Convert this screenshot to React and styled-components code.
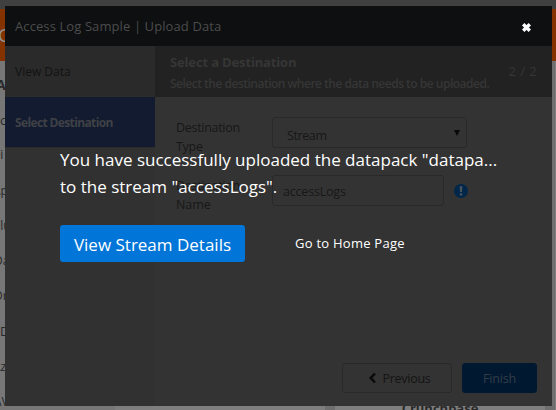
import React from "react";
import styled, { createGlobalStyle } from "styled-components";

const Global = createGlobalStyle`
  * { box-sizing: border-box; }
  html, body { margin: 0; overflow: hidden; background: #777; }
  body { font-family: "Open Sans", "Noto Sans", sans-serif; color: #171717; }
  button { font-family: inherit; padding: 0; }
`;

const Line = styled.span`
  display: block;
  white-space: nowrap;
  font-size: ${(p) => p.$size || 12}px;
  line-height: ${(p) => p.$lh || 19}px;
  letter-spacing: ${(p) => p.$ls || 0}px;
  font-weight: ${(p) => p.$weight || 400};
`;

const Page = styled.div`
  position: relative;
  width: 556px;
  height: 410px;
  overflow: hidden;
  background: #777;
`;
const TopStrip = styled.div`
  height: 9px;
  background: #404040;
`;
const BrandBar = styled.div`
  height: 52px;
  background: #833200;
  color: #929292;
  font-size: 18px;
  line-height: 52px;
  text-indent: -2px;
`;
const Catalog = styled.div`
  display: flex;
  justify-content: space-between;
  height: 349px;
`;
const Categories = styled.div`
  display: flex;
  flex-direction: column;
  gap: 17.2px;
  padding-top: 15px;
  width: 100px;
  color: #292929;
`;
const Category = styled(Line)`
  margin-left: ${(p) => p.$shift}px;
`;
const Cards = styled.div`
  display: flex;
  align-items: flex-end;
  gap: 10px;
  width: 441px;
  background: #6e6e6e;
`;
const Card = styled.div`
  width: 210px;
  height: 349px;
  flex: none;
  background: #7e7e7e;
  display: flex;
  flex-direction: column;
  justify-content: flex-end;
  align-items: center;
  color: #292929;
`;
const CardTitle = styled(Line)`
  margin-bottom: -8px;
`;

const Dialog = styled.section`
  position: absolute;
  left: 5px;
  top: 6px;
  width: 547px;
  height: 400px;
  background: #333;
  display: flex;
  flex-direction: column;
`;
const Header = styled.header`
  height: 40px;
  flex: none;
  padding: 0 20px 0 10px;
  display: flex;
  align-items: center;
  justify-content: space-between;
  background: #0d0f10;
  color: #4c4c4c;
`;
const Close = styled.button`
  width: 11px;
  height: 11px;
  border: 0;
  background: none;
  display: flex;
  margin-top: 3px;
`;
const Body = styled.div`
  flex: 1;
  display: flex;
`;
const Sidebar = styled.nav`
  width: 150px;
  flex: none;
  background: #313131;
`;
const Step = styled.div`
  height: 51px;
  padding-left: 10px;
  display: flex;
  align-items: center;
  border-bottom: 1px solid #2b2b2b;
  background: ${(p) => (p.$active ? "#121b2f" : "#2a2a2a")};
  color: ${(p) => (p.$active ? "#3f4146" : "#121212")};
`;
const Content = styled.main`
  flex: 1;
  min-width: 0;
  display: flex;
  flex-direction: column;
`;
const Banner = styled.div`
  height: 51px;
  flex: none;
  padding: 2px 15px 0;
  background: #222;
  color: #363636;
  display: flex;
  align-items: center;
  justify-content: space-between;
`;
const PageCount = styled(Line)`
  margin-top: -2px;
`;
const Form = styled.div`
  flex: 1;
  padding: 20px 0 0 21px;
  display: flex;
  flex-direction: column;
  gap: 19px;
`;
const Field = styled.div`
  height: 39px;
  display: flex;
  align-items: flex-start;
`;
const FieldLabel = styled.div`
  width: 96px;
  padding-top: 1px;
`;
const Control = styled.div`
  width: ${(p) => p.$width}px;
  height: 31px;
  padding: ${(p) => p.$pad};
  border: 1px solid #292929;
  border-radius: 3px;
  display: flex;
  justify-content: space-between;
`;
const Hint = styled.div`
  margin: 9px 0 0 10px;
  height: 14px;
  display: flex;
`;
const Caret = styled.svg`
  margin-top: 4px;
`;
const Footer = styled.footer`
  display: flex;
  justify-content: flex-end;
  gap: 10px;
  padding: 0 15px 13px 0;
`;
const FooterButton = styled.button`
  width: ${(p) => p.$width}px;
  height: 30px;
  border: 1px solid ${(p) => (p.$primary ? "#001830" : "#292929")};
  border-radius: 3px;
  background: ${(p) => (p.$primary ? "#001830" : "#333")};
  color: ${(p) => (p.$primary ? "#333e49" : "#141414")};
  display: flex;
  align-items: center;
  justify-content: center;
  gap: 5px;
`;
const PreviousButton = styled(FooterButton)`
  padding-left: 5px;
`;

const Success = styled.div`
  position: absolute;
  left: 55px;
  top: 140px;
  width: 480px;
  color: #fff;
`;
const Actions = styled.div`
  display: flex;
  align-items: center;
  margin-top: 25px;
`;
const DetailsButton = styled.button`
  width: 185px;
  height: 37px;
  border: 0;
  border-radius: 3px;
  background: #0275d8;
  color: #fff;
  display: flex;
  justify-content: center;
  align-items: center;
  padding-top: 2px;
`;
const HomeLink = styled.a`
  margin-left: 50px;
`;

const categories = [
  ["A", -4, 14, 700],
  ["c", 0, 13],
  ["Fi", -6],
  ["Ap", -7],
  ["Flu", -6],
  ["Da", -6],
  ["Dr", -6],
  ["D", 0, 13],
  ["Az", -7],
  ["AV", -6],
];

export default function App() {
  return (
    <>
      <Global />
      <Page>
        <TopStrip />
        <BrandBar>C</BrandBar>
        <Catalog>
          <Categories>
            {categories.map(([text, shift, size, weight]) => (
              <Category key={text} $shift={shift} $size={size} $weight={weight} $lh={18}>
                {text}
              </Category>
            ))}
          </Categories>
          <Cards>
            <Card />
            <Card>
              <CardTitle $size={13} $weight={700}>Crunchbase</CardTitle>
            </Card>
            <Card />
          </Cards>
        </Catalog>

        <Dialog>
          <Header>
            <Line $size={13} $ls={0.1}>Access Log Sample | Upload Data</Line>
            <Close aria-label="Close">
              <svg width="11" height="11" viewBox="0 0 11 11">
                <path d="M2.2 2.2 8.8 8.8M8.8 2.2 2.2 8.8" stroke="#fff" strokeWidth="3.4" />
              </svg>
            </Close>
          </Header>
          <Body>
            <Sidebar>
              <Step><Line>View Data</Line></Step>
              <Step $active><Line $weight={700} $ls={-0.63}>Select Destination</Line></Step>
            </Sidebar>
            <Content>
              <Banner>
                <div>
                  <Line $size={13} $weight={700} $lh={22} $ls={-0.15}>Select a Destination</Line>
                  <Line $weight={600} $lh={21} $ls={-0.5}>Select the destination where the data needs to be uploaded.</Line>
                </div>
                <PageCount $size={13} $ls={0.4}>2 / 2</PageCount>
              </Banner>
              <Form>
                <Field>
                  <FieldLabel>
                    <Line $size={12.5} $ls={-0.3}>Destination</Line>
                    <Line $size={12.5} $ls={-0.3}>Type</Line>
                  </FieldLabel>
                  <Control $width={195} $pad="8px 5px 0 14px">
                    <Line $size={12.5} $ls={-0.4}>Stream</Line>
                    <Caret width="8" height="7" viewBox="0 0 8 7"><path d="M1 0h6L4 6z" fill="#090909" /></Caret>
                  </Control>
                </Field>
                <Field>
                  <FieldLabel>
                    <Line $size={12.5} $ls={-0.3}>Destination</Line>
                    <Line $size={12.5} $ls={-0.1}>Name</Line>
                  </FieldLabel>
                  <Control $width={172} $pad="6px 5px 0 10px">
                    <Line $size={12.5} $ls={-0.2}>accessLogs</Line>
                  </Control>
                  <Hint>
                    <svg width="14" height="14" viewBox="0 0 14 14">
                      <circle cx="7" cy="7" r="7" fill="#00264a" />
                      <path d="M5.6 2.2h2.8l-.4 5.9H6zM5.8 9.2h2.4v2.3H5.8z" fill="#4a545d" />
                    </svg>
                  </Hint>
                </Field>
              </Form>
              <Footer>
                <PreviousButton $width={110}>
                  <svg width="9" height="12" viewBox="0 0 9 12">
                    <path d="M7 1.5 2.7 6 7 10.5" fill="none" stroke="#090909" strokeWidth="2.5" />
                  </svg>
                  <Line $size={12.5} $ls={-0.25}>Previous</Line>
                </PreviousButton>
                <FooterButton $width={75} $primary><Line $size={12.5} $ls={-0.2}>Finish</Line></FooterButton>
              </Footer>
            </Content>
          </Body>
          <Success>
            <Line $size={17} $lh={27}>You have successfully uploaded the datapack "datapa...</Line>
            <Line $size={17} $lh={27}>to the stream "accessLogs".</Line>
            <Actions>
              <DetailsButton><Line $size={17} $lh={26}>View Stream Details</Line></DetailsButton>
              <HomeLink><Line $size={13} $weight={500} $ls={0.25}>Go to Home Page</Line></HomeLink>
            </Actions>
          </Success>
        </Dialog>
      </Page>
    </>
  );
}
